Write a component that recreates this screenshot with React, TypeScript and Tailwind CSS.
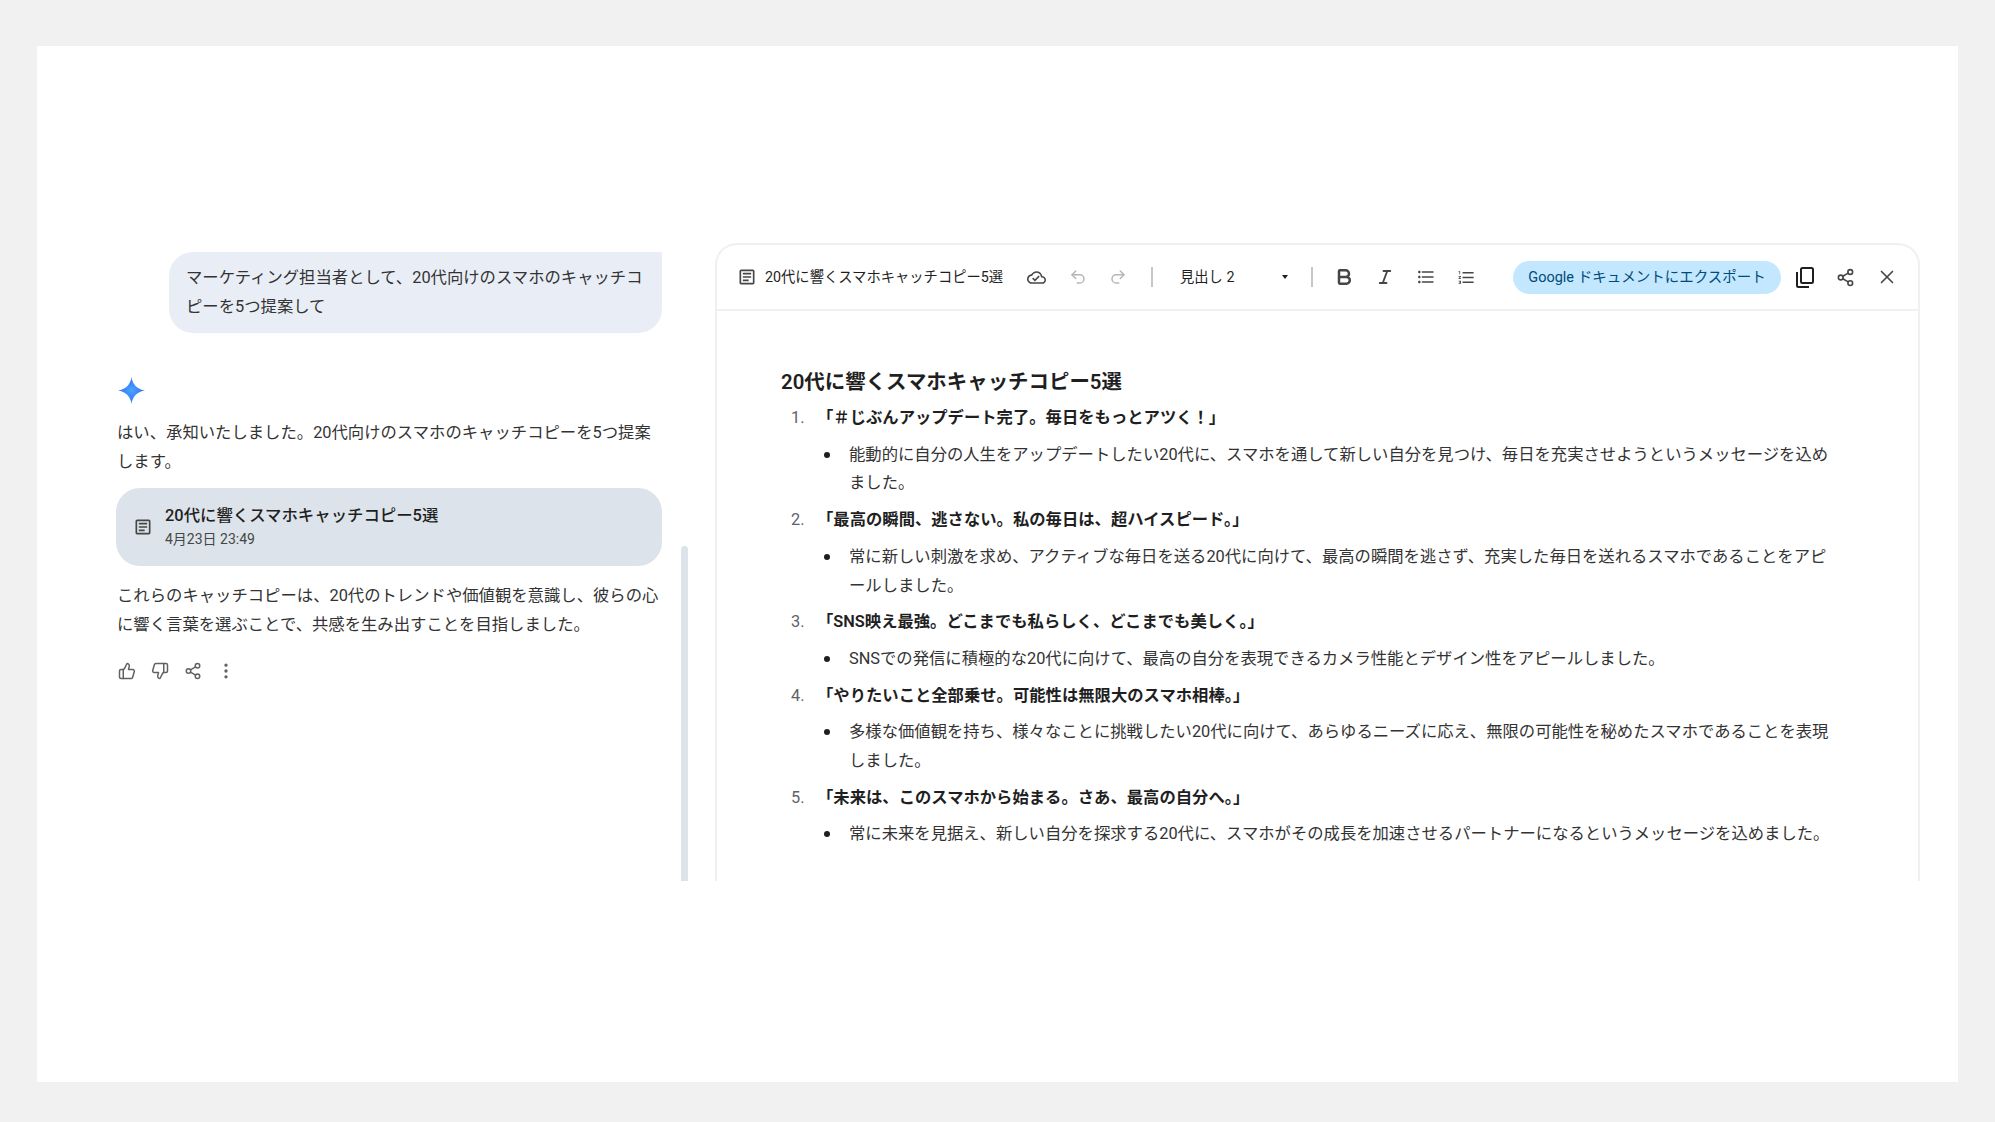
import { Bold, EllipsisVertical, Italic, Redo2, Share2, ThumbsDown, ThumbsUp, Undo2, X } from "lucide-react";

const items = [
  {
    title: "「＃じぶんアップデート完了。毎日をもっとアツく！」",
    lines: [
      "能動的に自分の人生をアップデートしたい20代に、スマホを通して新しい自分を見つけ、毎日を充実させようというメッセージを込め",
      "ました。",
    ],
  },
  {
    title: "「最高の瞬間、逃さない。私の毎日は、超ハイスピード。」",
    lines: [
      "常に新しい刺激を求め、アクティブな毎日を送る20代に向けて、最高の瞬間を逃さず、充実した毎日を送れるスマホであることをアピ",
      "ールしました。",
    ],
  },
  {
    title: "「SNS映え最強。どこまでも私らしく、どこまでも美しく。」",
    lines: ["SNSでの発信に積極的な20代に向けて、最高の自分を表現できるカメラ性能とデザイン性をアピールしました。"],
  },
  {
    title: "「やりたいこと全部乗せ。可能性は無限大のスマホ相棒。」",
    lines: [
      "多様な価値観を持ち、様々なことに挑戦したい20代に向けて、あらゆるニーズに応え、無限の可能性を秘めたスマホであることを表現",
      "しました。",
    ],
  },
  {
    title: "「未来は、このスマホから始まる。さあ、最高の自分へ。」",
    lines: ["常に未来を見据え、新しい自分を探求する20代に、スマホがその成長を加速させるパートナーになるというメッセージを込めました。"],
  },
];

function ArticleIcon({ className }: { className: string }) {
  return (
    <svg viewBox="0 0 24 24" fill="currentColor" className={className}>
      <path d="M19 5v14H5V5h14m0-2H5c-1.1 0-2 .9-2 2v14c0 1.1.9 2 2 2h14c1.1 0 2-.9 2-2V5c0-1.1-.9-2-2-2z" />
      <path d="M14 17H7v-2h7v2zm3-4H7v-2h10v2zm0-4H7V7h10v2z" />
    </svg>
  );
}

function GeminiStar() {
  return (
    <svg viewBox="0 0 28 28" className="w-[27px] h-[27px]">
      <defs>
        <radialGradient id="star" cx="50%" cy="50%" r="55%">
          <stop offset="0%" stopColor="#4aa3ff" />
          <stop offset="100%" stopColor="#2f6bf0" />
        </radialGradient>
      </defs>
      <path
        d="M14 0C14.8 7.6 20.4 13.2 28 14 20.4 14.8 14.8 20.4 14 28 13.2 20.4 7.6 14.8 0 14 7.6 13.2 13.2 7.6 14 0Z"
        fill="url(#star)"
      />
    </svg>
  );
}

export default function App() {
  return (
    <div className="h-[1122px] bg-[#f1f1f1] px-[37px] pt-[46px] font-['Roboto','Noto_Sans_CJK_JP',sans-serif] text-[#1f1f1f]">
      <div className="h-[1036px] bg-white pt-[197px]">
        <div className="flex h-[638px]">
          {/* chat column */}
          <div className="ml-[79px] w-[546px] pt-[9px] text-[16.35px] leading-[28.5px] text-[#333]">
            <div className="ml-[53px] h-[81px] whitespace-nowrap rounded-[24px] rounded-tr-[2px] bg-[#e9eef6] py-[12px] pl-[17px]">
              マーケティング担当者として、20代向けのスマホのキャッチコ
              <br />
              ピーを5つ提案して
            </div>
            <div className="mt-[44px] ml-[2px]">
              <GeminiStar />
            </div>
            <p className="mt-[15px] whitespace-nowrap pl-px">
              はい、承知いたしました。20代向けのスマホのキャッチコピーを5つ提案
              <br />
              します。
            </p>
            <div className="mt-[12px] flex h-[78px] items-center rounded-[24px] bg-[#dde3ea] pl-[17px]">
              <ArticleIcon className="w-[20px] h-[20px] text-[#444746]" />
              <div className="ml-[12px] mt-[-3px]">
                <div className="text-[16.4px] leading-[26px] font-medium text-[#1f1f1f]">20代に響くスマホキャッチコピー5選</div>
                <div className="text-[14px] leading-[20px] text-[#444746]">4月23日 23:49</div>
              </div>
            </div>
            <p className="mt-[16px] whitespace-nowrap pl-px">
              これらのキャッチコピーは、20代のトレンドや価値観を意識し、彼らの心
              <br />
              に響く言葉を選ぶことで、共感を生み出すことを目指しました。
            </p>
            <div className="mt-[22px] flex items-center pl-[2px] text-[#5f6368]">
              <ThumbsUp className="w-[18px] h-[18px]" />
              <ThumbsDown className="ml-[15px] w-[18px] h-[18px]" />
              <Share2 className="ml-[15px] w-[18px] h-[18px]" />
              <EllipsisVertical className="ml-[14px] w-[20px] h-[20px]" />
            </div>
          </div>

          {/* scrollbar */}
          <div className="ml-[19px] h-[335px] w-[7px] self-end rounded-t-[4px] bg-[#dde3ea]" />

          {/* document panel */}
          <div className="ml-[27px] w-[1205px] rounded-t-[22px] border-x-2 border-t-2 border-[#f0f0f0]">
            <div className="flex h-[66px] items-center border-b-2 border-[#f0f0f0] pl-[20px] text-[#444746]">
              <ArticleIcon className="w-[20px] h-[20px]" />
              <div className="ml-[8px] w-[239px] whitespace-nowrap pt-px text-[14.3px] text-[#1f1f1f]">20代に響くスマホキャッチコピー5選</div>
              <svg viewBox="0 0 24 24" fill="currentColor" className="ml-[23px] w-[19px] h-[19px]">
                <path d="M19.35 10.04C18.67 6.59 15.64 4 12 4 9.11 4 6.6 5.64 5.35 8.04 2.34 8.36 0 10.91 0 14c0 3.31 2.69 6 6 6h13c2.76 0 5-2.24 5-5 0-2.64-2.05-4.78-4.65-4.96zM19 18H6c-2.21 0-4-1.79-4-4 0-2.05 1.53-3.76 3.56-3.97l1.07-.11.5-.95C8.08 7.14 9.94 6 12 6c2.62 0 4.88 1.86 5.39 4.43l.3 1.5 1.53.11c1.56.1 2.78 1.41 2.78 2.96 0 1.65-1.35 3-3 3zm-9-3.82l-2.09-2.09L6.5 13.5 10 17l6.01-6.01-1.41-1.41z" />
              </svg>
              <Undo2 className="ml-[23px] w-[18px] h-[18px] text-[#b4b6b8]" />
              <Redo2 className="ml-[22px] w-[18px] h-[18px] text-[#b4b6b8]" />
              <div className="ml-[24px] h-[20px] w-[2px] bg-[#c7c7c7]" />
              <div className="ml-[27px] w-[102px] pt-px text-[14.3px] text-[#1f1f1f]">見出し 2</div>
              <div className="h-0 w-0 border-x-[3.5px] border-t-[4px] border-x-transparent border-t-[#1f1f1f]" />
              <div className="ml-[23px] h-[20px] w-[2px] bg-[#c7c7c7]" />
              <Bold className="ml-[21px] w-[20px] h-[20px]" strokeWidth={3} />
              <Italic className="ml-[22px] w-[18px] h-[18px]" strokeWidth={2.5} />
              <svg viewBox="0 0 24 24" fill="currentColor" className="ml-[22px] w-[20px] h-[20px]">
                <path d="M4 10.5c-.83 0-1.5.67-1.5 1.5s.67 1.5 1.5 1.5 1.5-.67 1.5-1.5-.67-1.5-1.5-1.5zm0-6c-.83 0-1.5.67-1.5 1.5S3.17 7.5 4 7.5 5.5 6.83 5.5 6 4.83 4.5 4 4.5zm0 12c-.83 0-1.5.68-1.5 1.5s.68 1.5 1.5 1.5 1.5-.68 1.5-1.5-.67-1.5-1.5-1.5zM7 19h14v-2H7v2zm0-6h14v-2H7v2zm0-8v2h14V5H7z" />
              </svg>
              <svg viewBox="0 0 24 24" fill="currentColor" className="ml-[21px] w-[19px] h-[19px]">
                <path d="M2 17h2v.5H3v1h1v.5H2v1h3v-4H2v1zm1-9h1V4H2v1h1v3zm-1 3h1.8L2 13.1v.9h3v-1H3.2L5 10.9V10H2v1zm5-6v2h14V5H7zm0 14h14v-2H7v2zm0-6h14v-2H7v2z" />
              </svg>
              <div className="ml-[37px] flex h-[33px] w-[268px] items-center justify-center rounded-full bg-[#c2e7ff] whitespace-nowrap pt-px text-[14.5px] text-[#004a77]">
                Google ドキュメントにエクスポート
              </div>
              <svg viewBox="0 0 18 21" fill="none" stroke="#1f1f1f" strokeWidth="2" className="ml-[15px] w-[18px] h-[21px]">
                <rect x="5" y="1" width="12" height="15" rx="1.5" />
                <path d="M1 5v13.5A1.5 1.5 0 0 0 2.5 20H13" />
              </svg>
              <Share2 className="ml-[22px] w-[19px] h-[19px]" />
              <X className="ml-[21px] w-[22px] h-[22px]" strokeWidth={1.8} />
            </div>

            <div className="pl-[64px] pt-[57px]">
              <h2 className="text-[20.45px] leading-[28px] font-semibold text-[#1f1f1f]">20代に響くスマホキャッチコピー5選</h2>
              <div className="mt-2 space-y-2 text-[16.33px] leading-[28.7px] text-[#333]">
                {items.map((item, i) => (
                  <div key={item.title} className="space-y-2">
                    <div className="flex whitespace-nowrap">
                      <span className="w-[36px] pl-[10px] text-[#5f6368]">{i + 1}.</span>
                      <span className="font-semibold text-[#1f1f1f]">{item.title}</span>
                    </div>
                    <div className="flex whitespace-nowrap pl-[43px]">
                      <span className="mt-[11px] h-[6px] w-[6px] rounded-full bg-[#1f1f1f]" />
                      <p className="ml-[19px]">
                        {item.lines.map((line) => (
                          <span key={line} className="block">{line}</span>
                        ))}
                      </p>
                    </div>
                  </div>
                ))}
              </div>
            </div>
          </div>
        </div>
      </div>
    </div>
  );
}
